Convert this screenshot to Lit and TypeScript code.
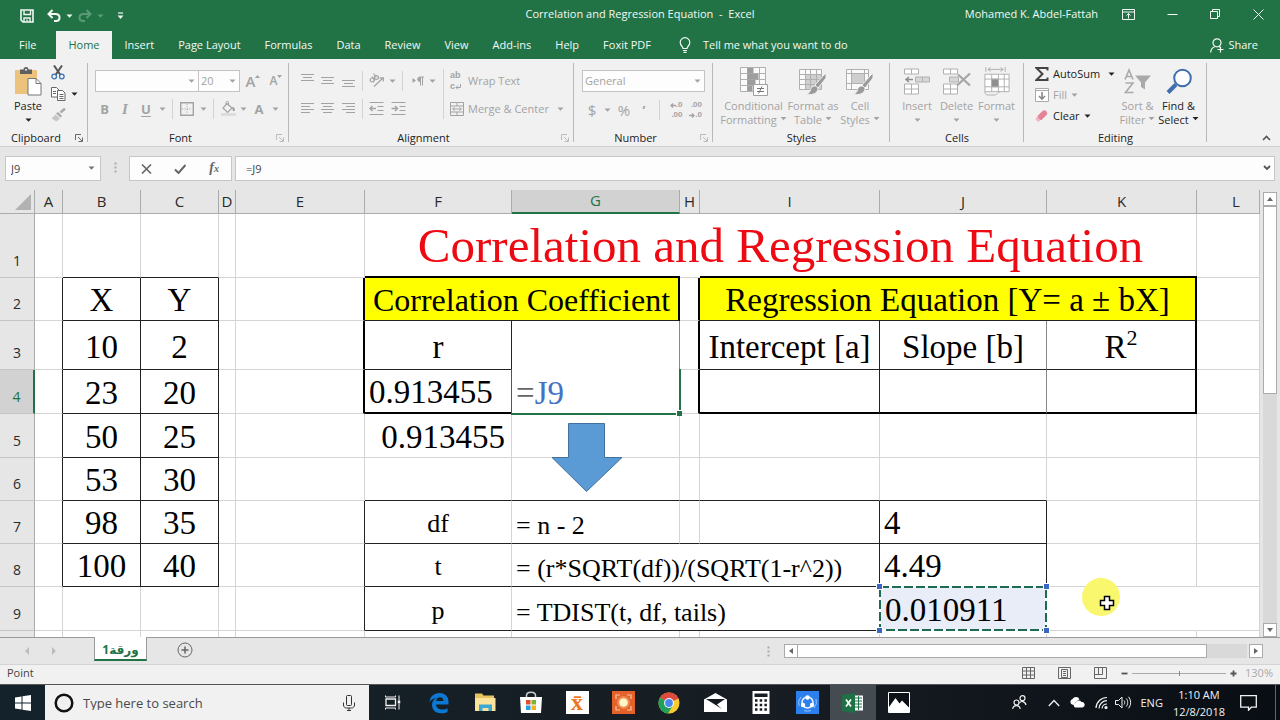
import { LitElement, html, svg, css, nothing } from "lit";
import { customElement } from "lit/decorators.js";

const down = html`<svg class="caret" width="7" height="4" viewBox="0 0 7 4" aria-hidden="true"><path d="M0.500 0.500h6L3.500 3.800z" fill="currentColor" /></svg>`;

const icon = (w: number, h: number, body: unknown) =>
  html`<svg width=${w} height=${h} viewBox="0 0 ${w} ${h}" fill="none" stroke="currentColor" aria-hidden="true">${body}</svg>`;

const btn = (label: string, body: unknown, cls = "") =>
  html`<button class="ic ${cls}" aria-label=${label}>${body}</button>`;

const lines = (rows: [number, number, number][]) =>
  svg`<g>${rows.map(([x, w, y]) => svg`<path d="M${x} ${y}.5h${w}" />`)}</g>`;

/* ---------- title bar ---------- */
const save = icon(14, 14, svg`<path d="M1 1h12v12H3l-2-2z" stroke-width="1.600"/><path d="M4 1.500v4h6.500v-4M4 13V9h6v4" stroke-width="1.400"/><path d="M7 10.500v2" stroke-width="1.400"/>`);
const undo = icon(14, 13, svg`<path d="M5.500 1L1.500 5l4 4M2 5h6.500c2.500 0 4 1.500 4 3.500s-1.500 3.500-3.500 3.500H7" stroke-width="2"/>`);
const redo = icon(14, 13, svg`<path d="M8.500 1l4 4-4 4M12 5H5.500C3 5 1.500 6.500 1.500 8.500S3 12 5 12h2" stroke-width="2"/>`);
const custom = icon(7, 8, svg`<path d="M1 1h5" stroke-width="1.200"/><path d="M0.500 3.500h6L3.500 7z" fill="currentColor" stroke="none"/>`);
const ribbonOpts = icon(13, 11, svg`<path d="M0.500 0.500h12v10h-12zM0.500 3h12M6.500 9.500v-5M4.500 6.500l2-2 2 2"/>`);
const minimise = icon(11, 11, svg`<path d="M0.500 5.500h10"/>`);
const restore = icon(11, 11, svg`<path d="M0.500 2.500h7v7h-7zM2.500 2.500v-2h7v7h-2"/>`);
const close = icon(11, 11, svg`<path d="M0.500 0.500l10 10M10.500 0.500l-10 10"/>`);
const bulb = icon(12, 16, svg`<path d="M4 11.500c0-2-2.800-2.800-2.800-6a4.800 4.800 0 0 1 9.600 0c0 3.200-2.800 4-2.800 6zM4 13.500h4M4.500 15.300h3" stroke-width="1.200"/>`);
const share = icon(14, 15, svg`<circle cx="7" cy="4.800" r="4" stroke-width="1.200"/><path d="M0.700 14.500c0-3 1.800-5 4-5.800M9 8.500l1 .7M10.500 8.500v6M7.500 11.500h6" stroke-width="1.200"/>`);

/* ---------- ribbon ---------- */
const paste = html`<svg width="28" height="29" viewBox="0 0 28 29" aria-hidden="true">
  <rect x="1" y="3" width="22" height="24" fill="#ecc27c"/><path d="M6 2.500h3.500a2.500 2.500 0 0 1 5 0H18v4.500H6z" fill="#5f5f5f"/><circle cx="12" cy="2.800" r="1" fill="#f1f1f1"/>
  <path d="M14 11.500h8l5 5V28H14z" fill="#fff" stroke="#777"/><path d="M22 11.500v5h5" fill="none" stroke="#777"/></svg>`;
const cut = html`<svg width="14" height="15" viewBox="0 0 14 15" fill="none" aria-hidden="true"><path d="M3 0.500l6.500 9.500M11 0.500L4.500 10" stroke="#555" stroke-width="2"/><circle cx="3.200" cy="11.500" r="2.300" stroke="#3d74b5" stroke-width="1.300"/><circle cx="10.800" cy="11.500" r="2.300" stroke="#3d74b5" stroke-width="1.300"/></svg>`;
const copy = html`<svg width="15" height="14" viewBox="0 0 15 14" fill="#fff" stroke="#666" aria-hidden="true"><path d="M0.500 0.500h5l2.500 2.500v7h-7.500z"/><path d="M2 4.500h3M2 6.500h3"/><path d="M6.500 3.500h5l2.500 2.500v7.500H6.500z"/><path d="M8.500 7.500h4M8.500 9.500h4M8.500 11.500h4"/></svg>`;
const brush = html`<svg width="15" height="14" viewBox="0 0 15 14" aria-hidden="true"><path d="M14 0.500L9.500 4.500" stroke="#aaa" stroke-width="2.500"/><path d="M7 4l4 4-1.500 1.500-4.500-4z" fill="#aaa"/><path d="M4.500 6.500l4.500 4-3.500 3-5-3z" fill="#c6c6c6"/></svg>`;
const launcher = html`<svg width="8" height="8" viewBox="0 0 8 8" fill="none" stroke="currentColor" aria-hidden="true"><path d="M0.500 6V0.500H6M3 3l4 4M7.500 3.500v4h-4"/></svg>`;

const borders = icon(14, 14, svg`<path d="M0.700 0.700h12.600v12.600H0.700z" stroke-width="1.400"/><path d="M7 2v10M2 7h10" stroke-dasharray="1 1.500"/>`);
const fill = html`<svg width="15" height="15" viewBox="0 0 15 15" fill="none" stroke="currentColor" aria-hidden="true"><path d="M6 2.500l5 4.500-4.500 4.500L2 7z" stroke-width="1.200"/><path d="M5 4V1.500c0-1.500 2.500-1.500 2.500 0V5"/><path d="M12 6c2 2 1.800 3.500 1 4-1 0-1.500-2-1-4z" fill="currentColor"/><rect x="0" y="12" width="15" height="3" fill="#ddd" stroke="none"/></svg>`;
const orient = icon(16, 15, svg`<g stroke-width="1.200"><circle cx="3.200" cy="7" r="2"/><path d="M3 3.500l3 4"/><circle cx="7.500" cy="4.500" r="2"/><path d="M4.500 0.500l3 4"/><path d="M5 13.500L14 5M10.500 4.800h3.800v3.700"/></g>`);
const rtl = icon(12, 10, svg`<path d="M0.500 2v5l3.500-2.500z" fill="currentColor" stroke="none"/><path d="M8.500 1v8.500M10.500 1v8.500M12 1H8"/><path d="M8 1a2 2 0 0 0 0 4.500z" fill="currentColor"/>`);
const indent = (out: boolean) => icon(15, 13, svg`<path d="M0.500 0.500h14M8.500 4.500h6M8.500 8.500h6M0.500 12.500h14"/><path d=${out ? "M1 6.500h6M3.500 4l-2.500 2.500 2.500 2.500" : "M0.500 6.500h6M4 4l2.500 2.500L4 9"} stroke-width="1.500"/>`);
const merge = icon(14, 14, svg`<path d="M0.500 0.500h13v13H0.500zM0.500 4h13M0.500 10h13M7 0.500V4M7 10v3.500M2.500 7h9M4.500 5.300L2.800 7l1.700 1.700M9.500 5.300L11.200 7 9.500 8.700"/>`);
const wrap = html`<span class="wrapic"><span>ab</span><span>c<svg width="6" height="7" viewBox="0 0 6 7" fill="none" stroke="currentColor" aria-hidden="true"><path d="M5.500 1v3.500H1M3 2.500l-2 2 2 2"/></svg></span></span>`;
const arrowL = html`<svg width="6" height="8" viewBox="0 0 6 8" fill="none" stroke="currentColor" stroke-width="1.300" aria-hidden="true"><path d="M6 4.500H1M3 2.500l-2 2 2 2"/></svg>`;
const arrowR = html`<svg width="6" height="8" viewBox="0 0 6 8" fill="none" stroke="currentColor" stroke-width="1.300" aria-hidden="true"><path d="M0 4.500h5M3 2.500l2 2-2 2"/></svg>`;
const dec = (a: string, b: string, left: boolean) => html`<span class="decic"><span>${left ? arrowL : nothing}${a}</span><span>${left ? nothing : arrowR}${b}</span></span>`;
const condIcon = html`<svg width="29" height="29" viewBox="0 0 29 29" fill="none" stroke="#b0b0b0" aria-hidden="true"><path d="M1.500 0.500h25v24h-25z" fill="#fafafa"/><path d="M1.500 6.500h25M1.500 12.500h25M1.500 18.500h25M8.500 0.500v24M20.500 0.500v24"/><path d="M8.500 1h6v5.500h-6zM8.500 7h11v5.500h-11zM8.500 13h8v5h-8zM8.500 19h5v5h-5z" fill="#9d9d9d" stroke="none"/><path d="M14.500 17.500h14v11h-14z" fill="#fff" stroke="#a0a0a0"/><path d="M18 21.500h7M18 24.500h7M23 19.500l-3.500 7" stroke="#777"/></svg>`;
const paintTable = (solid: boolean) => html`<svg width="28" height="29" viewBox="0 0 28 29" fill="none" stroke="#b0b0b0" aria-hidden="true"><path d="M0.500 2.500h22v20h-22z" fill="#fafafa"/><path d=${solid ? "M5 6h13v10H5z" : "M6 7h16v15H6z"} fill="#cfcfcf" stroke="none"/><path d=${solid ? "M0.500 6.500h22M0.500 16.500h22M5.500 2.500v20M18.500 2.500v20" : "M0.500 7.500h22M0.500 12.500h22M0.500 17.500h22M6.500 2.500v20M11.500 2.500v20M17.500 2.500v20"}/><path d="M27 6v5l-8 10-3-3 8-9z" fill="#9a9a9a" stroke="#f1f1f1"/><path d="M15.500 19c2.500 0 4 2 3 4.500-1.500 4-7 4.500-12 4 3.500-1 4.500-2.500 5-5 .500-2 2-3.500 4-3.500z" fill="#9a9a9a" stroke="#f1f1f1"/></svg>`;
const insertIcon = html`<svg width="26" height="28" viewBox="0 0 26 28" fill="#fff" stroke="#b0b0b0" aria-hidden="true"><path d="M0.500 1.500h14v5h-14zM7.500 1.500v5M0.500 16.500h14v10h-14zM7.500 16.500v10M0.500 21.500h14"/><path d="M11.500 9.500h14v5h-14zM18.500 9.500v5" fill="#d6d6d6"/><path d="M9 12H2M5 9.500L2 12l3 2.500" fill="none" stroke="#8c8c8c" stroke-width="1.500"/></svg>`;
const deleteIcon = html`<svg width="28" height="28" viewBox="0 0 28 28" fill="#fff" stroke="#b0b0b0" aria-hidden="true"><path d="M0.500 1.500h14v5h-14zM7.500 1.500v5M0.500 16.500h14v10h-14zM7.500 16.500v10M0.500 21.500h14"/><path d="M6.500 9.500h9v5h-9z" fill="#d6d6d6"/><path d="M15 7l12 11M27 6L14 18" fill="none" stroke="#a5a5a5" stroke-width="2.200"/></svg>`;
const formatIcon = html`<svg width="28" height="30" viewBox="0 0 28 30" fill="none" stroke="#b0b0b0" aria-hidden="true"><path d="M2.500 0v5M22.500 0v5M5 2.500h15M7.500 0.500l-3 2 3 2M17.500 0.500l3 2-3 2"/><path d="M1.500 7.500h25v18h-25z" fill="#fff"/><path d="M1.500 12.500h25M1.500 20.500h25M8.500 7.500v18M15.500 7.500v18M21.500 7.500v18"/><path d="M8.500 12.500h7v8h-7z" fill="#8f8f8f"/><path d="M1.500 25.500c0 4 3 3.500 6 3.500h4c3 0 3-3.500 6-3.500"/></svg>`;
const sigma = html`<svg width="14" height="14" viewBox="0 0 14 14" fill="none" stroke="#444" stroke-width="2" aria-hidden="true"><path d="M12.500 3.500V1H1.500l6 6-6 6h11v-2.500"/></svg>`;
const fillDown = html`<svg width="14" height="14" viewBox="0 0 14 14" fill="#fff" stroke="#aaa" aria-hidden="true"><path d="M0.500 0.500h13v13H0.500z"/><path d="M0.500 2.500h13"/><path d="M7 4v7M4 8l3 3.200L10 8" fill="none" stroke="#888" stroke-width="1.600"/></svg>`;
const eraser = html`<svg width="14" height="12" viewBox="0 0 14 12" aria-hidden="true"><path d="M8 0.500h3l1.500 3.500-6 6H4L2.500 6z" fill="#e58297"/><path d="M2 6.500L5.500 10 4 11.500H2.500L0.500 9z" fill="#f0b4c0"/></svg>`;
const sortFilter = html`<svg width="28" height="26" viewBox="0 0 28 26" fill="none" stroke="#aaa" stroke-width="1.600" aria-hidden="true"><path d="M1 11L5 1.500 9 11M2.500 8h5M1.500 14.500h7.500L1.500 24h8"/><path d="M11 7h16l-6 7v7l-4-2.500V14z" fill="#aaa" stroke="none"/></svg>`;
const find = html`<svg width="26" height="26" viewBox="0 0 26 26" fill="none" aria-hidden="true"><path d="M10 16L2 24" stroke="#3f6fae" stroke-width="4"/><circle cx="16.500" cy="9.500" r="8.300" fill="#fff" stroke="#3f6fae" stroke-width="2"/></svg>`;

/* ---------- taskbar ---------- */
const windows = html`<svg width="16" height="16" viewBox="0 0 16 16" fill="#fff" aria-hidden="true"><path d="M0 2.500l6.500-1v6H0zM7.500 1.300L16 0v7.500H7.500zM0 8.500h6.500v6L0 13.600zM7.500 8.500H16V16l-8.500-1.300z"/></svg>`;
const mic = html`<svg width="12" height="16" viewBox="0 0 12 16" fill="none" stroke="#333" aria-hidden="true"><rect x="3.500" y="0.500" width="5" height="10" rx="1"/><path d="M0.500 7.500v2.500c0 2 1.500 3 3 3h5c1.500 0 3-1 3-3V7.500M6 13v2.500M4 15.500h4"/></svg>`;
const taskview = icon(16, 15, svg`<path d="M1 4h9.500v6.500H1z" stroke-width="1.300"/><path d="M0.500 0.500v1.500h10V0.500M0.500 14.500V13h10v1.500M14 0.500v5M14 9v5.500"/><path d="M14 5.500v3" stroke-width="2.500"/>`);
const edge = html`<svg width="22" height="22" viewBox="0 0 22 22" aria-hidden="true"><path d="M1.500 10C2 4.500 6 1 11.500 1 17.500 1 20.500 5 20.500 10v2.500H8c.200 3.500 3 5 6.500 5 2 0 3.700-.500 5-1.300V20c-1.500.800-3.500 1.300-6 1.300-6 0-9.500-3.300-9.500-8.500 0-3 1.700-5.500 4.500-7C6 6.500 3 7.500 1.500 10zM8.200 9h7.300c0-2.500-1.300-3.800-3.500-3.800S8.500 6.800 8.200 9z" fill="#0d78d4"/></svg>`;
const explorer = html`<svg width="22" height="19" viewBox="0 0 22 19" aria-hidden="true"><path d="M1 0.500h7l1.500 2H20V18H1z" fill="#e9c35f"/><path d="M1 5h20.500v13H1z" fill="#fbe39b"/><path d="M5 18v-6.500h13V18h-3.500v-3h-6v3z" fill="#3aa7d4"/></svg>`;
const store = html`<svg width="24" height="23" viewBox="0 0 24 23" aria-hidden="true"><path d="M7.500 7V4.500c0-4.500 9-4.500 9 0V7" fill="none" stroke="#ccc" stroke-width="1.500"/><path d="M1 6h22l-1 16H2z" fill="#fff"/><path d="M7 9h4.500v4.500H7z" fill="#e04f2a"/><path d="M12.500 9H17v4.500h-4.500z" fill="#7cb52f"/><path d="M7 14.500h4.500V19H7z" fill="#2b9fdd"/><path d="M12.500 14.500H17V19h-4.500z" fill="#f2b31f"/></svg>`;
const recorder = html`<svg width="23" height="23" viewBox="0 0 23 23" fill="none" aria-hidden="true"><path d="M0 0h23v23H0z" fill="#e2622a"/><circle cx="11.500" cy="11.500" r="6.500" fill="#ee8a50"/><circle cx="11.500" cy="11.500" r="4.300" fill="#fff3c8"/><path d="M4 8V4h4M15 4h4v4M19 15v4h-4M8 19H4v-4" stroke="#f5c5a5" stroke-width="1.200"/></svg>`;
const chrome = html`<svg width="22" height="22" viewBox="0 0 22 22" aria-hidden="true"><circle cx="11" cy="11" r="10.500" fill="#f8cb30"/><path d="M11 11L2 5.500A10.500 10.500 0 0 1 20.500 6.500z" fill="#dd4b3e"/><path d="M2 5.500A10.500 10.500 0 0 0 10 21.500l4.500-7.500-3.500-3z" fill="#22a05b"/><path d="M11 6.500h9.600" stroke="#dd4b3e" stroke-width="1"/><circle cx="11" cy="11" r="4.900" fill="#fff"/><circle cx="11" cy="11" r="3.900" fill="#4a88ee"/></svg>`;
const mail = html`<svg width="23" height="20" viewBox="0 0 23 20" aria-hidden="true"><path d="M0 6.500L11.500 0 23 6.500V19H0z" fill="#fff"/><path d="M2 6h19l-8 5.500 5 4.500z" fill="#131a20"/></svg>`;
const calc = html`<svg width="18" height="23" viewBox="0 0 18 23" aria-hidden="true"><path d="M0.500 0h17v23H0.500z" fill="#fff"/><path d="M2.500 2.500h13v3.500h-13z" fill="#151c22"/><path d="M3 9.500h12M3 14h12M3 18.500h12" stroke="#151c22" stroke-width="2.500" stroke-dasharray="2.500 2.200"/></svg>`;
const shareit = html`<svg width="23" height="23" viewBox="0 0 23 23" fill="none" aria-hidden="true"><path d="M0 0h23v23H0z" fill="#2b80ee"/><circle cx="11.500" cy="11.500" r="5.500" stroke="#e8f1ff" stroke-width="1.500"/><circle cx="11.500" cy="6.500" r="2.200" fill="#fff"/><circle cx="7" cy="14" r="2.200" fill="#fff"/><circle cx="16" cy="14" r="2.200" fill="#fff"/><path d="M3 15a9 9 0 0 1 2-9M20 8a9 9 0 0 1-2 9M8 19.500a9 9 0 0 0 7 0" stroke="#9cc4fa"/></svg>`;
const excel = html`<svg width="22" height="20" viewBox="0 0 22 20" aria-hidden="true"><path d="M11 2.500h10v15H11z" fill="#fff"/><path d="M13 5h7M13 8h7M13 11h7M13 14h7M16.500 3v14" stroke="#1e7145"/><path d="M0 2l13-2v20L0 18z" fill="#1e7145"/><path d="M4 6.500l5 7M9 6.500l-5 7" stroke="#fff" stroke-width="1.700"/></svg>`;
const photos = html`<svg width="22" height="21" viewBox="0 0 22 21" aria-hidden="true"><path d="M0.500 0.500h21v20H0.500z" fill="#0c1116" stroke="#fff"/><path d="M1 15l6.500-9 4 5.500L14 8.500l7 7V20H1z" fill="#fff"/></svg>`;
const people = icon(15, 15, svg`<g stroke-width="1.200"><circle cx="10.500" cy="3.200" r="2.500"/><path d="M7.500 8c1-2 5.500-2.500 6.500 2"/><circle cx="4.500" cy="7.500" r="2.500"/><path d="M0.700 14c.500-4.500 7-4.500 7.500 0"/></g>`);
const chev = icon(12, 8, svg`<path d="M0.800 7L6 1.500 11.200 7" stroke-width="1.300"/>`);
const cloud = html`<svg width="16" height="11" viewBox="0 0 16 11" fill="#fff" aria-hidden="true"><path d="M3 7.500A3 3 0 0 1 3.500 2 4 4 0 0 1 10.500 2.200L7 4.500 5 8z"/><path d="M6 10.500a2.500 2.500 0 0 1 .300-4.500A3.500 3.500 0 0 1 12.500 5 2.800 2.800 0 0 1 13.500 10.500z"/></svg>`;
const wifi = icon(13, 13, svg`<g stroke-width="1.200"><path d="M1 12A11 11 0 0 1 12 1.500M4 12.500A8 8 0 0 1 12 4.700M7 12.500A5 5 0 0 1 12 8"/><circle cx="11" cy="11.500" r="1" fill="currentColor"/></g>`);
const volume = icon(17, 13, svg`<path d="M0.500 4.500h3L7 1v11L3.500 8.500h-3zM9 4.500c1 1 1 3 0 4M11.200 2.500c2 2 2 6 0 8M13.500 0.800c2.800 3 2.800 8.500 0 11.500"/>`);
const notify = icon(17, 16, svg`<path d="M0.700 0.700h15.600v11.500h-5L8.500 15.200v-3H0.700z" stroke-width="1.300"/>`);

type Cell = [cls: string, body?: unknown, span?: number];
const sup = html`R<sup>2</sup>`;
const editing = html`<span class="eq">=</span>J9<span class="edit"></span>`;
const arrow = html`<svg class="arrow" width="72" height="70" viewBox="0 0 72 70" aria-hidden="true"><path d="M17.500 0.500H53.500V34.500H71L35.500 68.500L1 34.500H17.500z" fill="#5b9bd5" stroke="#41719c"/></svg>`;
const ants = html`0.010911<svg class="ants" aria-hidden="true"><rect x="1" y="1" width="100%" height="100%"/><rect class="dash" x="1" y="1" width="100%" height="100%"/></svg><i class="h tl"></i><i class="h tr"></i><i class="h bl"></i><i class="h br"></i>`;
const pointer = html`<svg class="pointer" width="40" height="40" viewBox="0 0 40 40" aria-hidden="true"><circle cx="19" cy="19" r="19" fill="#f9f76e"/><path d="M22.500 18.500h5v4h4v5h-4v4h-5v-4h-4v-5h4z" fill="#fff" stroke="#000" stroke-width="1.500"/></svg>`;

const sheet: { n: string; cells: Cell[] }[] = [
  { n: "1", cells: [[""], ["bk"], ["bk"], [""], [""], ["title", "Correlation and Regression Equation", 6], [""]] },
  { n: "2", cells: [["rk"], ["n rk bk", "X"], ["n rk bk", "Y"], [""], ["rK"], ["y snug rK bk", "Correlation Coefficient", 2], ["rK"], ["y rK bk", "Regression Equation [Y= a ± bX]", 3], [""]] },
  { n: "3", cells: [["rk"], ["n rk bk", "10"], ["n rk bk", "2"], [""], ["rK"], ["n rk bk", "r"], ["rd bn"], ["rK"], ["n rk bk", "Intercept [a]"], ["n rd bk", "Slope [b]"], ["n rK bk", sup], [""]] },
  { n: "4", cells: [["rk"], ["n rk bk", "23"], ["n rk bk", "20"], [""], ["rK"], ["n left rk bK", "0.913455"], ["n left blue", editing], ["rK"], ["rk bK"], ["rd bK"], ["rK bK"], [""]] },
  { n: "5", cells: [["rk"], ["n rk bk", "50"], ["n rk bk", "25"], [""], [""], ["n right", "0.913455"], ["rel", arrow], [""], [""], [""], [""], [""]] },
  { n: "6", cells: [["rk"], ["n rk bk", "53"], ["n rk bk", "30"], [""], [""], ["bk"], ["bk"], ["bk"], ["bk"], ["bk"], [""], [""]] },
  { n: "7", cells: [["rk"], ["n rk bk", "98"], ["n rk bk", "35"], [""], ["rk"], ["s mid bk", "df"], ["s left bk", "= n - 2"], ["bk"], ["bk rk"], ["n left rk bk", "4"], [""], [""]] },
  { n: "8", cells: [["rk"], ["n rk bk", "100"], ["n rk bk", "40"], [""], ["rk"], ["s mid bk", "t"], ["s left bk rk", "= (r*SQRT(df))/(SQRT(1-r^2))", 3], ["n left rk", "4.49"], [""], [""]] },
  { n: "9", cells: [[""], [""], [""], [""], ["rk"], ["s mid bk", "p"], ["s left bk rk", "= TDIST(t, df, tails)", 3], ["n left src", ants], ["rel rn", pointer], [""]] },
  { n: "", cells: Array.from({ length: 12 }, () => [""] as Cell) },
];
const columns = "ABCDEFGHIJKL".split("");

const tabs = ["File", "Home", "Insert", "Page Layout", "Formulas", "Data", "Review", "View", "Add-ins", "Help", "Foxit PDF"];
const apps: [string, unknown, string?][] = [
  ["Task View", taskview], ["Edge", edge], ["File Explorer", explorer], ["Store", store],
  ["Statistics", html`<span class="xbar">x̄</span>`], ["Recorder", recorder], ["Chrome", chrome],
  ["Mail", mail], ["Calculator", calc], ["Share", shareit], ["Excel", excel, "active"], ["Photos", photos],
];

@customElement("app-root")
export class AppRoot extends LitElement {
  static styles = css`
    :host { display: flex; flex-direction: column; height: 100vh; overflow: hidden; background: #e6e6e6; color: #262626; font: 11px/14px "Open Sans", "Noto Sans", sans-serif; }
    *, *::before { box-sizing: border-box; }
    button { font: inherit; color: inherit; background: none; border: 0; padding: 0; margin: 0; }
    svg { display: block; flex: none; }
    input, select { font: inherit; border-radius: 0; margin: 0; }

    .titlebar { flex: none; height: 31px; display: grid; grid-template-columns: 1fr auto 1fr; align-items: center; background: #217346; color: #f3f8f5; white-space: pre; }
    .quick { display: flex; align-items: center; padding-left: 20px; height: 28px; }
    .quick .gap { margin-left: 13px; }
    .quick .near { margin-left: 5px; }
    .quick .off { color: #5b9a77; }
    .titlebar h1 { font: inherit; margin: 0; padding-bottom: 3px; }
    .window { display: flex; align-items: center; justify-content: flex-end; padding: 0 16px 3px 0; }
    .window button { width: 11px; margin-left: 32px; display: flex; justify-content: center; }
    .window button:first-of-type { width: 13px; margin-left: 24px; }

    .tabs { flex: none; height: 28px; display: flex; align-items: stretch; padding-left: 7px; background: #217346; color: #f3f8f5; }
    .tabs button { padding: 0 12px; white-space: nowrap; }
    .tabs button.on { background: #f1f1f1; color: #217346; margin: 0 1px 0 8px; }
    .tabs button.tell, .tabs button.share { display: flex; align-items: center; gap: 12px; padding-left: 16px; }
    .tabs button.share { margin-left: auto; gap: 4px; padding-right: 22px; }

    .ribbon { flex: none; height: 88px; display: flex; background: #f1f1f1; border-bottom: 1px solid #cfcfcf; color: #a3a3a3; }
    .group { flex: none; display: flex; flex-direction: column; padding: 4px 0 0; position: relative; }
    .group::after { content: ""; position: absolute; right: 0; top: 4px; bottom: 4px; width: 1px; background: #b8b8b8; }
    .body { flex: 1; display: flex; min-height: 0; }
    .label { flex: none; height: 16px; display: flex; align-items: center; padding: 0 5px; color: #222; text-align: center; }
    .label > span:first-child { flex: 1; }
    .label > .on, .label > svg { color: #bbb; margin-left: 8px; }
    .label > .on { color: #666; }
    .dark { color: #222; }
    .ic { display: flex; align-items: center; justify-content: center; gap: 4px; white-space: nowrap; }
    .big { display: flex; flex-direction: column; align-items: center; padding-top: 4px; white-space: nowrap; }
    .big svg:first-child { height: 29px; margin-bottom: 3px; }
    .big span { display: flex; align-items: center; gap: 3px; height: 14px; }
    .clip { width: 88px; } .fontg { width: 201px; } .align { width: 285px; } .number { width: 139px; }
    .styles { width: 177px; } .cells { width: 134px; } .edits { width: 183px; }
    .clip .body { padding-left: 11px; gap: 5px; }
    .clip .big { width: 34px; }
    .clip .stack { display: grid; grid-template-columns: 16px 16px; align-content: start; row-gap: 7px; padding-top: 2px; align-items: center; justify-items: center; }
    .rows { display: flex; flex-direction: column; gap: 7px; padding: 7px 7px 0; flex: 1; }
    .align .rows { padding-left: 8px; padding-right: 0; flex: none; }
    .number .rows { padding: 7px 8px 0; }
    .row { display: grid; height: 21px; align-items: center; justify-items: center; }
    .f1 { grid-template-columns: 104px 41px 26px 20px; }
    .f2 { grid-template-columns: 19px 22px 20px 12px 8px 22px 10px 10px 20px 10px 22px 10px; }
    .a1 { grid-template-columns: 20px 20px 22px 6px 23px 8px 12px 19px 10px; }
    .a2 { grid-template-columns: 20px 20px 22px 6px 23px 20px; }
    .n2 { grid-template-columns: 20px 10px 24px 16px 14px 17px 22px; }
    .sep { width: 1px; height: 20px; background: #d2d2d2; }
    .tall { width: 1px; height: 50px; margin: 6px 6px 0; background: #d2d2d2; }
    .text { display: flex; flex-direction: column; gap: 7px; padding-top: 7px; }
    .text .ic { height: 21px; justify-content: flex-start; }
    .text .ic .caret { margin-left: 4px; }
    .combo { position: relative; width: 100%; height: 22px; }
    .combo select { appearance: none; width: 100%; height: 100%; border: 1px solid #c3c3c3; background: #fdfdfd; color: #a3a3a3; padding: 0 2px; opacity: 1; }
    .combo .caret { position: absolute; right: 4px; top: 9px; }
    .f1 .combo + .combo select { border-left: 0; }
    .glyph { font-size: 15px; line-height: 18px; }
    .b { font-weight: 700; font-size: 13px; } .i { font: italic 700 15px/18px "Liberation Serif", serif; } .u { font-weight: 700; font-size: 13px; text-decoration: underline; text-underline-offset: 2px; }
    .grow { font-size: 15px; font-weight: 600; align-items: flex-start; gap: 0; }
    .shrink { font-size: 12px; }
    .wrapic, .decic { display: flex; flex-direction: column; font: 700 9px/11px "Liberation Sans", sans-serif; width: 14px; }
    .wrapic span, .decic span { display: flex; align-items: center; }
    .decic { font-size: 8px; line-height: 10px; width: 16px; align-items: flex-end; white-space: nowrap; }
    .styles .body { display: grid; grid-template-columns: 67px 52px 42px; padding-left: 7px; }
    .cells .body { display: grid; grid-template-columns: 40px 39px 41px; padding-left: 7px; }
    .cells .caret { margin-top: 5px; }
    .clip .big .caret { margin-top: 5px; }
    .edits .body { padding-left: 11px; }
    .edits .list { width: 82px; display: flex; flex-direction: column; }
    .edits .list .ic { height: 21px; justify-content: flex-start; }
    .edits .list .auto .caret { margin-left: 4px; }
    .edits .big { width: 41px; }
    .collapse { margin-left: auto; align-self: flex-end; padding: 0 9px 5px 0; color: #555; }

    .formula { flex: none; display: flex; padding: 9px 5px; }
    .name { position: relative; width: 96px; height: 25px; }
    .formula input { height: 25px; width: 100%; border: 1px solid #c6c6c6; background: #fdfdfd; color: #444; padding: 0 5px; outline: 0; }
    .name .caret { position: absolute; right: 6px; top: 10px; color: #777; }
    .grip { width: 28px; display: grid; place-items: center; color: #aaa; }
    .fx { width: 103px; height: 25px; display: grid; grid-template-columns: 1fr 1fr 1fr; background: #fdfdfd; border: 1px solid #c6c6c6; color: #666; margin-right: 3px; }
    .fx i { font: italic 700 14px/16px "Liberation Serif", serif; }
    .fx small { font-size: 10px; }
    .bar { flex: 1; position: relative; }
    .formula .bar input { padding-left: 10px; }
    .bar svg { position: absolute; right: 4px; top: 9px; color: #555; }

    .work { flex: 1; min-height: 0; display: flex; }
    .grid { flex: 1; overflow: hidden; }
    table { width: 100%; table-layout: fixed; border-collapse: separate; border-spacing: 0; }
    .cR { width: 35px; } .cA { width: 28px; } .cB, .cC { width: 78px; } .cD { width: 17px; } .cE { width: 129px; } .cF { width: 147px; }
    .cG { width: 168px; } .cH { width: 20px; } .cI { width: 180px; } .cJ { width: 167px; } .cK { width: 150px; }
    tr { height: 43px; }
    .r0 { height: 24px; } .r1 { height: 64px; } .r3 { height: 49px; } .r4, .r5, .r9 { height: 44px; }
    th { font-weight: 400; font-size: 15px; line-height: 20px; padding: 0 0 2px; background: #e6e6e6; color: #2a2a2a; border: 0 solid #ababab; border-right-width: 1px; border-bottom-width: 1px; }
    thead th:last-child { padding-left: 16px; }
    tbody th { vertical-align: bottom; padding-bottom: 6px; border-bottom-color: #c4c4c4; font-size: 14px; }
    th.on { background: #d2d2d2; color: #217346; }
    thead th.on { border-bottom: 2px solid #217346; }
    tbody th.on { border-right: 2px solid #217346; }
    .corner svg { margin: 3px 0 0 15px; }
    td { padding: 0; background: #fff; color: #000; border: 0 solid #d4d4d4; border-right-width: 1px; border-bottom-width: 1px; font: 33px/38px "Liberation Serif", serif; text-align: center; vertical-align: bottom; white-space: nowrap; }
    .n, .y { padding-bottom: 1px; }
    .r3 .n { padding-bottom: 3px; }
    .s { font-size: 26px; line-height: 30px; padding-bottom: 2px; }
    .mid { vertical-align: middle; padding: 4px 0 0; }
    .left { text-align: left; padding-left: 4px; }
    .right { text-align: right; padding-right: 6px; }
    .title { font-size: 49px; line-height: 56px; color: #ee0a12; vertical-align: middle; }
    .y { background: #ff0; box-shadow: 0 -2px 0 #000; }
    .snug { font-size: 32px; }
    .rk { border-right-color: #222; } .bk { border-bottom-color: #222; } .rd { border-right-color: #888; } .bn { border-bottom-color: #fff; } .rn { border-right-color: #fff; }
    .rK { border-right: 2px solid #000; } .bK { border-bottom: 2px solid #000; }
    sup { font-size: 22px; line-height: 0; vertical-align: 13px; }
    .rel, .blue, .src { position: relative; }
    .blue, .src { z-index: 1; }
    .blue { color: #4472c4; } .eq { color: #666; }
    .edit { position: absolute; inset: -1px -2px -2px -1px; border: 2px solid #217346; border-top: 0; border-left-width: 1px; }
    .edit::after { content: ""; position: absolute; right: -3px; bottom: -3px; width: 5px; height: 5px; background: #217346; border: 1px solid #fff; border-width: 1px 0 0 1px; }
    .arrow { position: absolute; left: 39px; top: 9px; }
    .src { background: #e9edf8; padding-left: 5px; }
    .ants { position: absolute; left: -1px; top: -1px; width: 100%; height: 100%; overflow: visible; }
    .ants rect { fill: none; stroke: #fff; stroke-width: 2; }
    .ants .dash { stroke: #1d6b53; stroke-dasharray: 9 3; }
    .h { position: absolute; width: 5px; height: 5px; background: #3c66c4; outline: 1px solid #fff; }
    .tl { left: -3px; top: -3px; } .tr { right: -3px; top: -3px; } .bl { left: -3px; bottom: -3px; } .br { right: -3px; bottom: -3px; }
    .pointer { position: absolute; left: 35px; top: -9px; }

    .vscroll { flex: none; width: 20px; display: flex; flex-direction: column; padding: 2px 3px 0; }
    .sb { width: 14px; height: 14px; flex: none; display: grid; place-items: center; background: #fff; border: 1px solid #ababab; color: #666; }
    .vscroll .track { flex: 1; background: #d9d9d9; }
    .vscroll .thumb { height: 45%; background: #fff; border: 1px solid #ababab; }

    .sheets { flex: none; height: 27px; display: flex; align-items: flex-start; border-top: 1px solid #9a9a9a; color: #666; }
    .sheets .nav { width: 94px; height: 26px; display: flex; align-items: center; gap: 23px; padding-left: 25px; color: #bdbdbd; }
    .sheets .tab { width: 53px; height: 24px; margin-top: -1px; padding-top: 3px; background: #fff; border: 1px solid #9a9a9a; border-top: 0; border-bottom: 2px solid #217346; color: #217346; font: 700 12px/16px "Open Sans", "DejaVu Sans", sans-serif; }
    .sheets .add { margin: 4px 0 0 30px; }
    .hs { margin-left: auto; width: 498px; margin-right: 17px; height: 26px; display: flex; align-items: center; }
    .hs .grip2 { width: 19px; padding-left: 2px; color: #aaa; }
    .hs .track { flex: 1; height: 14px; background: #d9d9d9; margin-right: 2px; }
    .hs .thumb { height: 14px; width: 91%; background: #fff; border: 1px solid #ababab; border-left: 0; }

    .status { flex: none; height: 20px; display: flex; align-items: center; background: #f1f1f1; border-top: 1px solid #d4d4d4; padding: 0 7px 3px; color: #444; }
    .views { margin-left: auto; display: flex; gap: 23px; color: #666; padding-right: 14px; }
    .zoom { display: flex; align-items: center; gap: 4px; color: #555; }
    .zoom input { appearance: none; width: 94px; height: 12px; background: linear-gradient(#aaa, #aaa) center / 100% 1px no-repeat; }
    .zoom input::-webkit-slider-thumb { appearance: none; width: 1px; height: 5px; background: #888; }
    .zoom span { color: #aaa; padding-left: 4px; }

    .taskbar { flex: none; height: 36px; display: flex; background: linear-gradient(90deg, #14222b, #171d22 60%, #080e14); color: #f2f2f2; border-top: 1px solid #555; }
    .taskbar button { display: flex; align-items: center; justify-content: center; }
    .start { width: 45px; }
    .search { width: 324px; display: flex; align-items: center; gap: 9px; background: #f1f1f1; padding: 0 14px 0 9px; }
    .search input { flex: 1; border: 0; background: none; font-size: 13px; color: #444; padding: 0; outline: 0; }
    .search input::placeholder { color: #4a4a4a; opacity: 1; }
    .apps { display: grid; grid-auto-flow: column; grid-auto-columns: 46px; padding-left: 1px; }
    .apps .active { background: #454c51; }
    .xbar { width: 23px; height: 23px; background: #fff; color: #ee7622; font: 700 24px/23px "Liberation Serif", serif; }
    .tray { margin-left: auto; display: flex; align-items: center; }
    .people { margin-right: 21px; } .up { margin-right: 9px; } .cl { margin-right: 10px; } .wf { margin-right: 7px; } .vol { margin-right: 8px; }
    .lang { margin-right: 10px; }
    .clock { line-height: 17px; text-align: center; margin-right: 15px; }
    .note { margin-right: 18px; }
    .peek { width: 5px; height: 100%; border-left: 1px solid #666; }
  `;

  render() {
    const grip = icon(3, 13, svg`<path d="M1.500 0.500v12" stroke-width="2" stroke-dasharray="2 2"/>`);
    const top = icon(13, 13, lines([[0, 13, 0], [2, 9, 3], [0, 13, 6]]));
    const middle = icon(13, 13, lines([[0, 13, 3], [2, 9, 6], [0, 13, 9]]));
    const bottom = icon(13, 13, lines([[0, 13, 6], [2, 9, 9], [0, 13, 12]]));
    const al = icon(13, 13, lines([[0, 13, 1], [0, 9, 4], [0, 13, 7], [0, 9, 10]]));
    const ac = icon(13, 13, lines([[0, 13, 1], [2, 9, 4], [0, 13, 7], [2, 9, 10]]));
    const ar = icon(13, 13, lines([[0, 13, 1], [4, 9, 4], [0, 13, 7], [4, 9, 10]]));
    const sep = html`<i class="sep"></i>`;
    return html`
      <header class="titlebar">
        <div class="quick">
          ${btn("Save", save)}<span class="gap">${btn("Undo", undo)}</span><span class="near">${down}</span>
          <span class="near off">${btn("Redo", redo)}</span><span class="near off">${down}</span><span class="gap">${btn("Customize toolbar", custom)}</span>
        </div>
        <h1>${"Correlation and Regression Equation  -  Excel"}</h1>
        <div class="window"><span>Mohamed K. Abdel-Fattah</span><button aria-label="Ribbon options">${ribbonOpts}</button><button aria-label="Minimize">${minimise}</button><button aria-label="Restore">${restore}</button><button aria-label="Close">${close}</button></div>
      </header>
      <nav class="tabs">
        ${tabs.map((t) => html`<button class=${t === "Home" ? "on" : nothing}>${t}</button>`)}
        <button class="tell">${bulb}Tell me what you want to do</button>
        <button class="share">${share}Share</button>
      </nav>
      <section class="ribbon">
        <div class="group clip"><div class="body">
          <button class="big dark">${paste}<span>Paste</span>${down}</button>
          <div class="stack">${btn("Cut", cut)}<i></i>${btn("Copy", copy)}${btn("Copy options", down, "dark")}${btn("Format Painter", brush)}</div>
        </div><div class="label"><span>Clipboard</span><span class="on">${launcher}</span></div></div>

        <div class="group fontg"><div class="rows">
          <div class="row f1">
            <div class="combo"><select aria-label="Font"><option></option></select>${down}</div>
            <div class="combo"><select aria-label="Font size"><option>20</option></select>${down}</div>
            ${btn("Increase font size", html`A<svg width="5" height="5" viewBox="0 0 5 5" aria-hidden="true"><path d="M0 4l2.500-3L5 4z" fill="currentColor"/></svg>`, "grow")}
            ${btn("Decrease font size", html`A<svg width="5" height="5" viewBox="0 0 5 5" aria-hidden="true"><path d="M0 1l2.500 3L5 1z" fill="currentColor"/></svg>`, "grow shrink")}
          </div>
          <div class="row f2">
            ${btn("Bold", "B", "b")}${btn("Italic", "I", "i")}${btn("Underline", "U", "u")}${down}${sep}${btn("Borders", borders)}${down}${sep}${btn("Fill color", fill)}${down}${btn("Font color", "A", "b")}${down}
          </div>
        </div><div class="label"><span>Font</span>${launcher}</div></div>

        <div class="group align"><div class="body">
          <div class="rows">
            <div class="row a1">${btn("Top align", top)}${btn("Middle align", middle)}${btn("Bottom align", bottom)}${sep}${btn("Orientation", orient)}${down}${sep}${btn("Text direction", rtl)}${down}</div>
            <div class="row a2">${btn("Align left", al)}${btn("Center", ac)}${btn("Align right", ar)}${sep}${btn("Decrease indent", indent(true))}${btn("Increase indent", indent(false))}</div>
          </div>
          <i class="tall"></i>
          <div class="text"><button class="ic">${wrap}Wrap Text</button><button class="ic">${merge}Merge &amp; Center${down}</button></div>
        </div><div class="label"><span>Alignment</span>${launcher}</div></div>

        <div class="group number"><div class="rows">
          <div class="combo"><select aria-label="Number format"><option>General</option></select>${down}</div>
          <div class="row n2">${btn("Currency", "$", "glyph")}${down}${btn("Percent", "%", "glyph")}${btn("Comma", "’", "b")}${sep}${btn("Increase decimal", dec(".0", ".00", true))}${btn("Decrease decimal", dec(".00", ".0", false))}</div>
        </div><div class="label"><span>Number</span>${launcher}</div></div>

        <div class="group styles"><div class="body">
          <button class="big">${condIcon}<span>Conditional</span><span>Formatting ${down}</span></button>
          <button class="big">${paintTable(false)}<span>Format as</span><span>Table ${down}</span></button>
          <button class="big">${paintTable(true)}<span>Cell</span><span>Styles ${down}</span></button>
        </div><div class="label"><span>Styles</span></div></div>

        <div class="group cells"><div class="body">
          <button class="big">${insertIcon}<span>Insert</span>${down}</button>
          <button class="big">${deleteIcon}<span>Delete</span>${down}</button>
          <button class="big">${formatIcon}<span>Format</span>${down}</button>
        </div><div class="label"><span>Cells</span></div></div>

        <div class="group edits"><div class="body">
          <div class="list"><button class="ic dark auto">${sigma}AutoSum ${down}</button><button class="ic">${fillDown}Fill ${down}</button><button class="ic dark">${eraser}Clear ${down}</button></div>
          <button class="big">${sortFilter}<span>Sort &amp;</span><span>Filter ${down}</span></button>
          <button class="big dark">${find}<span>Find &amp;</span><span>Select ${down}</span></button>
        </div><div class="label"><span>Editing</span></div></div>
        <button class="collapse" aria-label="Collapse ribbon">${icon(9, 6, svg`<path d="M1 5l3.500-3.500L8 5" stroke-width="1.600"/>`)}</button>
      </section>

      <div class="formula">
        <div class="name"><input aria-label="Name box" .value=${"J9"} />${down}</div>
        <span class="grip">${grip}</span>
        <div class="fx">
          ${btn("Cancel", icon(11, 10, svg`<path d="M1 0.500l9 9M10 0.500l-9 9" stroke-width="1.600"/>`))}
          ${btn("Enter", icon(12, 10, svg`<path d="M1 5.500l3.500 3.500L11.500 1" stroke-width="2"/>`))}
          ${btn("Insert function", html`<i>f<small>x</small></i>`)}
        </div>
        <div class="bar"><input aria-label="Formula" .value=${"=J9"} />${icon(8, 6, svg`<path d="M1 1l3 3 3-3" stroke-width="1.800"/>`)}</div>
      </div>

      <main class="work">
        <div class="grid">
          <table>
            <colgroup><col class="cR" />${columns.map((c) => html`<col class="c${c}" />`)}</colgroup>
            <thead><tr class="r0">
              <th class="corner"><svg width="16" height="16" viewBox="0 0 16 16" aria-hidden="true"><path d="M16 0v16H0z" fill="#b2b2b2"/></svg></th>
              ${columns.map((c) => html`<th scope="col" class=${c === "G" ? "on" : nothing}>${c}</th>`)}
            </tr></thead>
            <tbody>
              ${sheet.map((r) => html`<tr class="r${r.n}"><th scope="row" class=${r.n === "4" ? "on" : nothing}>${r.n}</th>${r.cells.map(([cls, body, span]) => html`<td class=${cls || nothing} colspan=${span ?? nothing}>${body ?? nothing}</td>`)}</tr>`)}
            </tbody>
          </table>
        </div>
        <div class="vscroll">
          <button class="sb" aria-label="Scroll up">${icon(6, 4, svg`<path d="M0 4l3-4 3 4z" fill="currentColor" stroke="none"/>`)}</button>
          <div class="track"><div class="thumb"></div></div>
          <button class="sb" aria-label="Scroll down">${icon(6, 4, svg`<path d="M0 0l3 4 3-4z" fill="currentColor" stroke="none"/>`)}</button>
        </div>
      </main>

      <div class="sheets">
        <div class="nav">${icon(4, 8, svg`<path d="M4 0L0 4l4 4z" fill="currentColor" stroke="none"/>`)}${icon(4, 8, svg`<path d="M0 0l4 4-4 4z" fill="currentColor" stroke="none"/>`)}</div>
        <button class="tab" lang="ar" dir="rtl">ورقة1</button>
        <button class="add" aria-label="New sheet">${icon(16, 16, svg`<circle cx="8" cy="8" r="7"/><path d="M4.500 8h7M8 4.500v7" stroke-width="1.500"/>`)}</button>
        <div class="hs"><span class="grip2">${icon(3, 11, svg`<path d="M1.500 0.500v10" stroke-width="2" stroke-dasharray="2 2"/>`)}</span>
          <button class="sb" aria-label="Scroll left">${icon(4, 6, svg`<path d="M4 0L0 3l4 3z" fill="currentColor" stroke="none"/>`)}</button>
          <div class="track"><div class="thumb"></div></div>
          <button class="sb" aria-label="Scroll right">${icon(4, 6, svg`<path d="M0 0l4 3-4 3z" fill="currentColor" stroke="none"/>`)}</button>
        </div>
      </div>

      <footer class="status">
        <span>Point</span>
        <div class="views">
          ${btn("Normal view", icon(13, 12, svg`<path d="M0.500 0.500h12v11h-12zM0.500 4h12M0.500 8h12M4.500 0.500v11M8.500 0.500v11"/>`))}
          ${btn("Page layout view", icon(13, 12, svg`<path d="M0.500 0.500h12v11h-12zM3.500 2.500h6v8h-6zM5 4.500h3M5 6.500h3M5 8.500h3"/>`))}
          ${btn("Page break view", icon(13, 12, svg`<path d="M0.500 0.500h12v11h-12zM0.500 7.500h8v-7M4.500 0.500v7"/>`))}
        </div>
        <div class="zoom">${btn("Zoom out", icon(7, 7, svg`<path d="M0.500 3.500h6" stroke-width="1.800"/>`))}<input type="range" min="10" max="190" value="100" aria-label="Zoom" />${btn("Zoom in", icon(7, 7, svg`<path d="M0.500 3.500h6M3.500 0.500v6" stroke-width="1.800"/>`))}<span>130%</span></div>
      </footer>

      <footer class="taskbar">
        <button class="start" aria-label="Start">${windows}</button>
        <label class="search"><svg width="20" height="20" viewBox="0 0 20 20" aria-hidden="true"><circle cx="10" cy="10" r="8.300" fill="none" stroke="#111" stroke-width="2.500"/></svg><input aria-label="Search" placeholder="Type here to search" />${mic}</label>
        <div class="apps">${apps.map(([n, i, c]) => html`<button aria-label=${n} class=${c ?? nothing}>${i}</button>`)}</div>
        <div class="tray">
          <button class="people" aria-label="People">${people}</button><button class="up" aria-label="Hidden icons">${chev}</button><span class="cl">${cloud}</span><span class="wf">${wifi}</span><span class="vol">${volume}</span>
          <span class="lang">ENG</span><span class="clock">1:10 AM<br />12/8/2018</span><button class="note" aria-label="Notifications">${notify}</button><i class="peek"></i>
        </div>
      </footer>
    `;
  }
}
